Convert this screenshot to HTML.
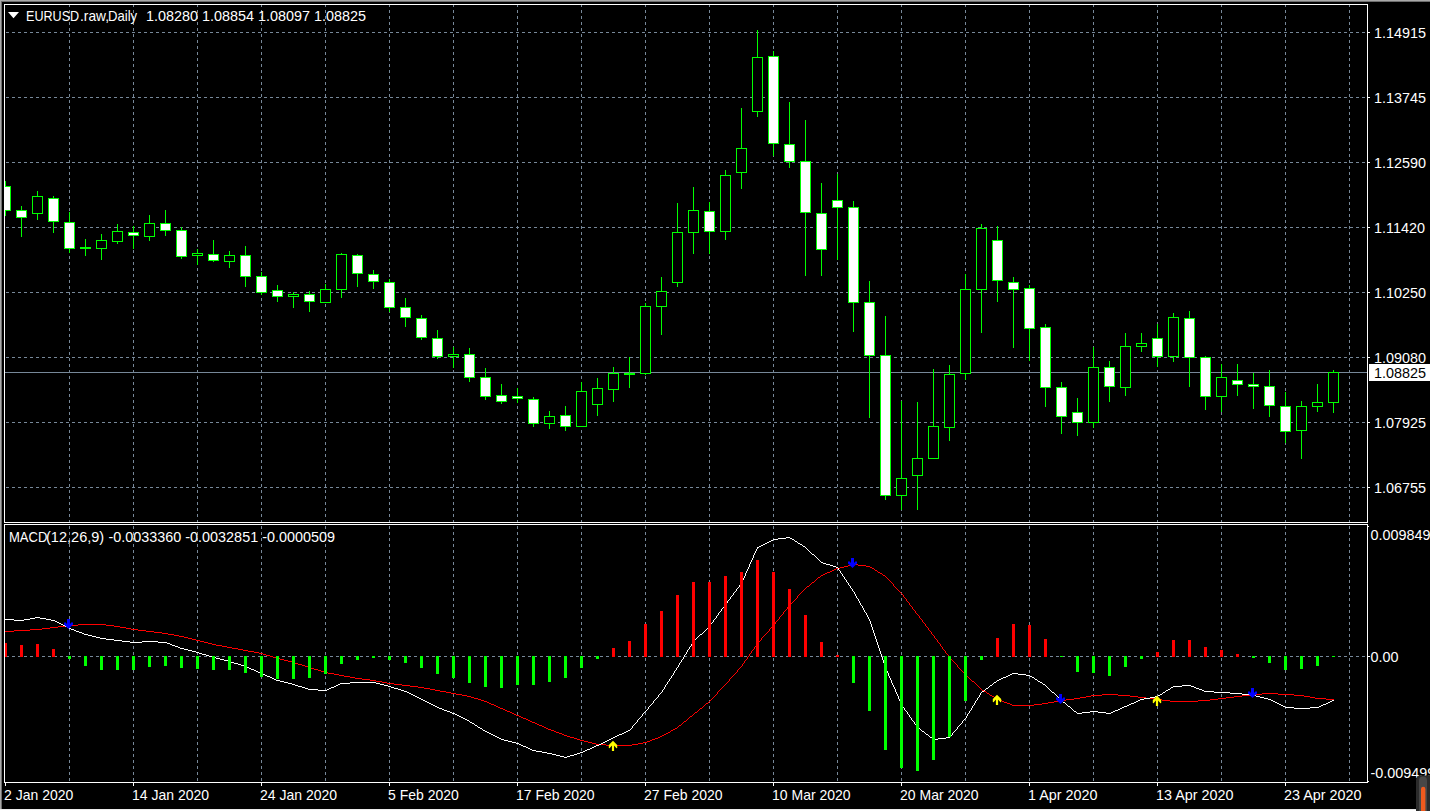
<!DOCTYPE html>
<html><head><meta charset="utf-8"><title>EURUSD.raw,Daily</title>
<style>
html,body{margin:0;padding:0;background:#000;overflow:hidden;}
body{width:1430px;height:811px;overflow:hidden;position:relative;font-family:"Liberation Sans",sans-serif;}
.t{position:absolute;white-space:pre;font-size:14.4px;line-height:16px;height:16px;transform-origin:0 0;font-family:"Liberation Sans",sans-serif;}
</style></head><body>
<svg width="1430" height="811" viewBox="0 0 1430 811" shape-rendering="crispEdges" style="position:absolute;left:0;top:0"><rect x="0" y="0" width="1430" height="811" fill="#000"/>
<rect x="0" y="0" width="1430" height="1" fill="#a9a9a9"/>
<rect x="0" y="1" width="1430" height="1" fill="#6f6f6f"/>
<rect x="0" y="0" width="1" height="811" fill="#a9a9a9"/>
<rect x="1" y="1" width="1" height="810" fill="#6f6f6f"/>
<rect x="2" y="2" width="1428" height="1" fill="#000"/>
<rect x="0" y="809" width="1430" height="1" fill="#ececec"/>
<rect x="0" y="810" width="1430" height="1" fill="#ffffff"/>
<rect x="0" y="2" width="1" height="807" fill="#a9a9a9"/>
<defs><clipPath id="cm"><rect x="5" y="5" width="1362" height="517"/></clipPath><clipPath id="cs"><rect x="5" y="525" width="1362" height="257"/></clipPath><clipPath id="ca"><rect x="5" y="5" width="1362" height="777"/></clipPath></defs>
<line x1="0" y1="32.5" x2="1367" y2="32.5" stroke="#778899" stroke-width="1" stroke-dasharray="3 3" clip-path="url(#cm)"/>
<line x1="0" y1="97.5" x2="1367" y2="97.5" stroke="#778899" stroke-width="1" stroke-dasharray="3 3" clip-path="url(#cm)"/>
<line x1="0" y1="162.5" x2="1367" y2="162.5" stroke="#778899" stroke-width="1" stroke-dasharray="3 3" clip-path="url(#cm)"/>
<line x1="0" y1="227.5" x2="1367" y2="227.5" stroke="#778899" stroke-width="1" stroke-dasharray="3 3" clip-path="url(#cm)"/>
<line x1="0" y1="292.5" x2="1367" y2="292.5" stroke="#778899" stroke-width="1" stroke-dasharray="3 3" clip-path="url(#cm)"/>
<line x1="0" y1="357.5" x2="1367" y2="357.5" stroke="#778899" stroke-width="1" stroke-dasharray="3 3" clip-path="url(#cm)"/>
<line x1="0" y1="422.5" x2="1367" y2="422.5" stroke="#778899" stroke-width="1" stroke-dasharray="3 3" clip-path="url(#cm)"/>
<line x1="0" y1="487.5" x2="1367" y2="487.5" stroke="#778899" stroke-width="1" stroke-dasharray="3 3" clip-path="url(#cm)"/>
<line x1="69.5" y1="4" x2="69.5" y2="522" stroke="#778899" stroke-width="1" stroke-dasharray="3 3" clip-path="url(#cm)"/>
<line x1="69.5" y1="520" x2="69.5" y2="782" stroke="#778899" stroke-width="1" stroke-dasharray="3 3" clip-path="url(#cs)"/>
<line x1="133.5" y1="4" x2="133.5" y2="522" stroke="#778899" stroke-width="1" stroke-dasharray="3 3" clip-path="url(#cm)"/>
<line x1="133.5" y1="520" x2="133.5" y2="782" stroke="#778899" stroke-width="1" stroke-dasharray="3 3" clip-path="url(#cs)"/>
<line x1="197.5" y1="4" x2="197.5" y2="522" stroke="#778899" stroke-width="1" stroke-dasharray="3 3" clip-path="url(#cm)"/>
<line x1="197.5" y1="520" x2="197.5" y2="782" stroke="#778899" stroke-width="1" stroke-dasharray="3 3" clip-path="url(#cs)"/>
<line x1="261.5" y1="4" x2="261.5" y2="522" stroke="#778899" stroke-width="1" stroke-dasharray="3 3" clip-path="url(#cm)"/>
<line x1="261.5" y1="520" x2="261.5" y2="782" stroke="#778899" stroke-width="1" stroke-dasharray="3 3" clip-path="url(#cs)"/>
<line x1="325.5" y1="4" x2="325.5" y2="522" stroke="#778899" stroke-width="1" stroke-dasharray="3 3" clip-path="url(#cm)"/>
<line x1="325.5" y1="520" x2="325.5" y2="782" stroke="#778899" stroke-width="1" stroke-dasharray="3 3" clip-path="url(#cs)"/>
<line x1="389.5" y1="4" x2="389.5" y2="522" stroke="#778899" stroke-width="1" stroke-dasharray="3 3" clip-path="url(#cm)"/>
<line x1="389.5" y1="520" x2="389.5" y2="782" stroke="#778899" stroke-width="1" stroke-dasharray="3 3" clip-path="url(#cs)"/>
<line x1="453.5" y1="4" x2="453.5" y2="522" stroke="#778899" stroke-width="1" stroke-dasharray="3 3" clip-path="url(#cm)"/>
<line x1="453.5" y1="520" x2="453.5" y2="782" stroke="#778899" stroke-width="1" stroke-dasharray="3 3" clip-path="url(#cs)"/>
<line x1="517.5" y1="4" x2="517.5" y2="522" stroke="#778899" stroke-width="1" stroke-dasharray="3 3" clip-path="url(#cm)"/>
<line x1="517.5" y1="520" x2="517.5" y2="782" stroke="#778899" stroke-width="1" stroke-dasharray="3 3" clip-path="url(#cs)"/>
<line x1="581.5" y1="4" x2="581.5" y2="522" stroke="#778899" stroke-width="1" stroke-dasharray="3 3" clip-path="url(#cm)"/>
<line x1="581.5" y1="520" x2="581.5" y2="782" stroke="#778899" stroke-width="1" stroke-dasharray="3 3" clip-path="url(#cs)"/>
<line x1="645.5" y1="4" x2="645.5" y2="522" stroke="#778899" stroke-width="1" stroke-dasharray="3 3" clip-path="url(#cm)"/>
<line x1="645.5" y1="520" x2="645.5" y2="782" stroke="#778899" stroke-width="1" stroke-dasharray="3 3" clip-path="url(#cs)"/>
<line x1="709.5" y1="4" x2="709.5" y2="522" stroke="#778899" stroke-width="1" stroke-dasharray="3 3" clip-path="url(#cm)"/>
<line x1="709.5" y1="520" x2="709.5" y2="782" stroke="#778899" stroke-width="1" stroke-dasharray="3 3" clip-path="url(#cs)"/>
<line x1="773.5" y1="4" x2="773.5" y2="522" stroke="#778899" stroke-width="1" stroke-dasharray="3 3" clip-path="url(#cm)"/>
<line x1="773.5" y1="520" x2="773.5" y2="782" stroke="#778899" stroke-width="1" stroke-dasharray="3 3" clip-path="url(#cs)"/>
<line x1="837.5" y1="4" x2="837.5" y2="522" stroke="#778899" stroke-width="1" stroke-dasharray="3 3" clip-path="url(#cm)"/>
<line x1="837.5" y1="520" x2="837.5" y2="782" stroke="#778899" stroke-width="1" stroke-dasharray="3 3" clip-path="url(#cs)"/>
<line x1="901.5" y1="4" x2="901.5" y2="522" stroke="#778899" stroke-width="1" stroke-dasharray="3 3" clip-path="url(#cm)"/>
<line x1="901.5" y1="520" x2="901.5" y2="782" stroke="#778899" stroke-width="1" stroke-dasharray="3 3" clip-path="url(#cs)"/>
<line x1="965.5" y1="4" x2="965.5" y2="522" stroke="#778899" stroke-width="1" stroke-dasharray="3 3" clip-path="url(#cm)"/>
<line x1="965.5" y1="520" x2="965.5" y2="782" stroke="#778899" stroke-width="1" stroke-dasharray="3 3" clip-path="url(#cs)"/>
<line x1="1029.5" y1="4" x2="1029.5" y2="522" stroke="#778899" stroke-width="1" stroke-dasharray="3 3" clip-path="url(#cm)"/>
<line x1="1029.5" y1="520" x2="1029.5" y2="782" stroke="#778899" stroke-width="1" stroke-dasharray="3 3" clip-path="url(#cs)"/>
<line x1="1093.5" y1="4" x2="1093.5" y2="522" stroke="#778899" stroke-width="1" stroke-dasharray="3 3" clip-path="url(#cm)"/>
<line x1="1093.5" y1="520" x2="1093.5" y2="782" stroke="#778899" stroke-width="1" stroke-dasharray="3 3" clip-path="url(#cs)"/>
<line x1="1157.5" y1="4" x2="1157.5" y2="522" stroke="#778899" stroke-width="1" stroke-dasharray="3 3" clip-path="url(#cm)"/>
<line x1="1157.5" y1="520" x2="1157.5" y2="782" stroke="#778899" stroke-width="1" stroke-dasharray="3 3" clip-path="url(#cs)"/>
<line x1="1221.5" y1="4" x2="1221.5" y2="522" stroke="#778899" stroke-width="1" stroke-dasharray="3 3" clip-path="url(#cm)"/>
<line x1="1221.5" y1="520" x2="1221.5" y2="782" stroke="#778899" stroke-width="1" stroke-dasharray="3 3" clip-path="url(#cs)"/>
<line x1="1285.5" y1="4" x2="1285.5" y2="522" stroke="#778899" stroke-width="1" stroke-dasharray="3 3" clip-path="url(#cm)"/>
<line x1="1285.5" y1="520" x2="1285.5" y2="782" stroke="#778899" stroke-width="1" stroke-dasharray="3 3" clip-path="url(#cs)"/>
<line x1="1349.5" y1="4" x2="1349.5" y2="522" stroke="#778899" stroke-width="1" stroke-dasharray="3 3" clip-path="url(#cm)"/>
<line x1="1349.5" y1="520" x2="1349.5" y2="782" stroke="#778899" stroke-width="1" stroke-dasharray="3 3" clip-path="url(#cs)"/>
<line x1="0" y1="656.5" x2="1367" y2="656.5" stroke="#778899" stroke-width="1" stroke-dasharray="3 3" clip-path="url(#cs)"/>
<rect x="5" y="372" width="1363" height="1" fill="#778899"/>
<g clip-path="url(#cm)">
<rect x="5" y="181" width="1" height="35" fill="#00ff00"/>
<rect x="0" y="186" width="11" height="25" fill="#00ff00"/>
<rect x="1" y="187" width="9" height="23" fill="#fff"/>
<rect x="21" y="206" width="1" height="31" fill="#00ff00"/>
<rect x="16" y="210" width="11" height="8" fill="#00ff00"/>
<rect x="17" y="211" width="9" height="6" fill="#fff"/>
<rect x="37" y="191" width="1" height="29" fill="#00ff00"/>
<rect x="32" y="196" width="11" height="18" fill="#00ff00"/>
<rect x="33" y="197" width="9" height="16" fill="#000"/>
<rect x="53" y="196" width="1" height="37" fill="#00ff00"/>
<rect x="48" y="198" width="11" height="24" fill="#00ff00"/>
<rect x="49" y="199" width="9" height="22" fill="#fff"/>
<rect x="69" y="212" width="1" height="41" fill="#00ff00"/>
<rect x="64" y="222" width="11" height="27" fill="#00ff00"/>
<rect x="65" y="223" width="9" height="25" fill="#fff"/>
<rect x="85" y="239" width="1" height="17" fill="#00ff00"/>
<rect x="80" y="247" width="11" height="2" fill="#00ff00"/>
<rect x="101" y="234" width="1" height="26" fill="#00ff00"/>
<rect x="96" y="240" width="11" height="9" fill="#00ff00"/>
<rect x="97" y="241" width="9" height="7" fill="#000"/>
<rect x="117" y="224" width="1" height="20" fill="#00ff00"/>
<rect x="112" y="231" width="11" height="11" fill="#00ff00"/>
<rect x="113" y="232" width="9" height="9" fill="#000"/>
<rect x="133" y="226" width="1" height="23" fill="#00ff00"/>
<rect x="128" y="232" width="11" height="4" fill="#00ff00"/>
<rect x="129" y="233" width="9" height="2" fill="#fff"/>
<rect x="149" y="215" width="1" height="26" fill="#00ff00"/>
<rect x="144" y="223" width="11" height="14" fill="#00ff00"/>
<rect x="145" y="224" width="9" height="12" fill="#000"/>
<rect x="165" y="210" width="1" height="26" fill="#00ff00"/>
<rect x="160" y="223" width="11" height="8" fill="#00ff00"/>
<rect x="161" y="224" width="9" height="6" fill="#fff"/>
<rect x="181" y="227" width="1" height="32" fill="#00ff00"/>
<rect x="176" y="230" width="11" height="27" fill="#00ff00"/>
<rect x="177" y="231" width="9" height="25" fill="#fff"/>
<rect x="197" y="249" width="1" height="16" fill="#00ff00"/>
<rect x="192" y="253" width="11" height="3" fill="#00ff00"/>
<rect x="193" y="254" width="9" height="1" fill="#000"/>
<rect x="213" y="240" width="1" height="22" fill="#00ff00"/>
<rect x="208" y="254" width="11" height="7" fill="#00ff00"/>
<rect x="209" y="255" width="9" height="5" fill="#fff"/>
<rect x="229" y="251" width="1" height="17" fill="#00ff00"/>
<rect x="224" y="255" width="11" height="7" fill="#00ff00"/>
<rect x="225" y="256" width="9" height="5" fill="#000"/>
<rect x="245" y="246" width="1" height="41" fill="#00ff00"/>
<rect x="240" y="255" width="11" height="22" fill="#00ff00"/>
<rect x="241" y="256" width="9" height="20" fill="#fff"/>
<rect x="261" y="272" width="1" height="23" fill="#00ff00"/>
<rect x="256" y="276" width="11" height="17" fill="#00ff00"/>
<rect x="257" y="277" width="9" height="15" fill="#fff"/>
<rect x="277" y="285" width="1" height="17" fill="#00ff00"/>
<rect x="272" y="290" width="11" height="7" fill="#00ff00"/>
<rect x="273" y="291" width="9" height="5" fill="#fff"/>
<rect x="293" y="292" width="1" height="16" fill="#00ff00"/>
<rect x="288" y="294" width="11" height="3" fill="#00ff00"/>
<rect x="289" y="295" width="9" height="1" fill="#000"/>
<rect x="309" y="291" width="1" height="21" fill="#00ff00"/>
<rect x="304" y="294" width="11" height="8" fill="#00ff00"/>
<rect x="305" y="295" width="9" height="6" fill="#fff"/>
<rect x="325" y="284" width="1" height="19" fill="#00ff00"/>
<rect x="320" y="289" width="11" height="14" fill="#00ff00"/>
<rect x="321" y="290" width="9" height="12" fill="#000"/>
<rect x="341" y="253" width="1" height="45" fill="#00ff00"/>
<rect x="336" y="254" width="11" height="36" fill="#00ff00"/>
<rect x="337" y="255" width="9" height="34" fill="#000"/>
<rect x="357" y="254" width="1" height="33" fill="#00ff00"/>
<rect x="352" y="255" width="11" height="19" fill="#00ff00"/>
<rect x="353" y="256" width="9" height="17" fill="#fff"/>
<rect x="373" y="270" width="1" height="19" fill="#00ff00"/>
<rect x="368" y="274" width="11" height="8" fill="#00ff00"/>
<rect x="369" y="275" width="9" height="6" fill="#fff"/>
<rect x="389" y="279" width="1" height="33" fill="#00ff00"/>
<rect x="384" y="282" width="11" height="26" fill="#00ff00"/>
<rect x="385" y="283" width="9" height="24" fill="#fff"/>
<rect x="405" y="298" width="1" height="29" fill="#00ff00"/>
<rect x="400" y="307" width="11" height="11" fill="#00ff00"/>
<rect x="401" y="308" width="9" height="9" fill="#fff"/>
<rect x="421" y="315" width="1" height="25" fill="#00ff00"/>
<rect x="416" y="318" width="11" height="20" fill="#00ff00"/>
<rect x="417" y="319" width="9" height="18" fill="#fff"/>
<rect x="437" y="330" width="1" height="29" fill="#00ff00"/>
<rect x="432" y="338" width="11" height="19" fill="#00ff00"/>
<rect x="433" y="339" width="9" height="17" fill="#fff"/>
<rect x="453" y="347" width="1" height="21" fill="#00ff00"/>
<rect x="448" y="354" width="11" height="3" fill="#00ff00"/>
<rect x="449" y="355" width="9" height="1" fill="#000"/>
<rect x="469" y="348" width="1" height="34" fill="#00ff00"/>
<rect x="464" y="354" width="11" height="24" fill="#00ff00"/>
<rect x="465" y="355" width="9" height="22" fill="#fff"/>
<rect x="485" y="368" width="1" height="32" fill="#00ff00"/>
<rect x="480" y="377" width="11" height="20" fill="#00ff00"/>
<rect x="481" y="378" width="9" height="18" fill="#fff"/>
<rect x="501" y="384" width="1" height="20" fill="#00ff00"/>
<rect x="496" y="395" width="11" height="7" fill="#00ff00"/>
<rect x="497" y="396" width="9" height="5" fill="#fff"/>
<rect x="517" y="388" width="1" height="15" fill="#00ff00"/>
<rect x="512" y="396" width="11" height="3" fill="#00ff00"/>
<rect x="513" y="397" width="9" height="1" fill="#fff"/>
<rect x="533" y="397" width="1" height="30" fill="#00ff00"/>
<rect x="528" y="399" width="11" height="25" fill="#00ff00"/>
<rect x="529" y="400" width="9" height="23" fill="#fff"/>
<rect x="549" y="411" width="1" height="18" fill="#00ff00"/>
<rect x="544" y="416" width="11" height="8" fill="#00ff00"/>
<rect x="545" y="417" width="9" height="6" fill="#000"/>
<rect x="565" y="406" width="1" height="25" fill="#00ff00"/>
<rect x="560" y="415" width="11" height="12" fill="#00ff00"/>
<rect x="561" y="416" width="9" height="10" fill="#fff"/>
<rect x="581" y="382" width="1" height="45" fill="#00ff00"/>
<rect x="576" y="391" width="11" height="36" fill="#00ff00"/>
<rect x="577" y="392" width="9" height="34" fill="#000"/>
<rect x="597" y="378" width="1" height="38" fill="#00ff00"/>
<rect x="592" y="388" width="11" height="17" fill="#00ff00"/>
<rect x="593" y="389" width="9" height="15" fill="#000"/>
<rect x="613" y="367" width="1" height="35" fill="#00ff00"/>
<rect x="608" y="373" width="11" height="17" fill="#00ff00"/>
<rect x="609" y="374" width="9" height="15" fill="#000"/>
<rect x="629" y="357" width="1" height="31" fill="#00ff00"/>
<rect x="624" y="373" width="11" height="2" fill="#00ff00"/>
<rect x="645" y="303" width="1" height="72" fill="#00ff00"/>
<rect x="640" y="306" width="11" height="68" fill="#00ff00"/>
<rect x="641" y="307" width="9" height="66" fill="#000"/>
<rect x="661" y="277" width="1" height="58" fill="#00ff00"/>
<rect x="656" y="291" width="11" height="16" fill="#00ff00"/>
<rect x="657" y="292" width="9" height="14" fill="#000"/>
<rect x="677" y="203" width="1" height="84" fill="#00ff00"/>
<rect x="672" y="232" width="11" height="51" fill="#00ff00"/>
<rect x="673" y="233" width="9" height="49" fill="#000"/>
<rect x="693" y="187" width="1" height="67" fill="#00ff00"/>
<rect x="688" y="210" width="11" height="23" fill="#00ff00"/>
<rect x="689" y="211" width="9" height="21" fill="#000"/>
<rect x="709" y="202" width="1" height="52" fill="#00ff00"/>
<rect x="704" y="211" width="11" height="21" fill="#00ff00"/>
<rect x="705" y="212" width="9" height="19" fill="#fff"/>
<rect x="725" y="170" width="1" height="70" fill="#00ff00"/>
<rect x="720" y="175" width="11" height="57" fill="#00ff00"/>
<rect x="721" y="176" width="9" height="55" fill="#000"/>
<rect x="741" y="108" width="1" height="81" fill="#00ff00"/>
<rect x="736" y="148" width="11" height="25" fill="#00ff00"/>
<rect x="737" y="149" width="9" height="23" fill="#000"/>
<rect x="757" y="30" width="1" height="87" fill="#00ff00"/>
<rect x="752" y="57" width="11" height="55" fill="#00ff00"/>
<rect x="753" y="58" width="9" height="53" fill="#000"/>
<rect x="773" y="51" width="1" height="105" fill="#00ff00"/>
<rect x="768" y="56" width="11" height="88" fill="#00ff00"/>
<rect x="769" y="57" width="9" height="86" fill="#fff"/>
<rect x="789" y="102" width="1" height="66" fill="#00ff00"/>
<rect x="784" y="144" width="11" height="18" fill="#00ff00"/>
<rect x="785" y="145" width="9" height="16" fill="#fff"/>
<rect x="805" y="120" width="1" height="156" fill="#00ff00"/>
<rect x="800" y="161" width="11" height="52" fill="#00ff00"/>
<rect x="801" y="162" width="9" height="50" fill="#fff"/>
<rect x="821" y="183" width="1" height="93" fill="#00ff00"/>
<rect x="816" y="213" width="11" height="37" fill="#00ff00"/>
<rect x="817" y="214" width="9" height="35" fill="#fff"/>
<rect x="837" y="174" width="1" height="86" fill="#00ff00"/>
<rect x="832" y="200" width="11" height="8" fill="#00ff00"/>
<rect x="833" y="201" width="9" height="6" fill="#fff"/>
<rect x="853" y="201" width="1" height="131" fill="#00ff00"/>
<rect x="848" y="207" width="11" height="96" fill="#00ff00"/>
<rect x="849" y="208" width="9" height="94" fill="#fff"/>
<rect x="869" y="281" width="1" height="137" fill="#00ff00"/>
<rect x="864" y="302" width="11" height="54" fill="#00ff00"/>
<rect x="865" y="303" width="9" height="52" fill="#fff"/>
<rect x="885" y="316" width="1" height="184" fill="#00ff00"/>
<rect x="880" y="355" width="11" height="141" fill="#00ff00"/>
<rect x="881" y="356" width="9" height="139" fill="#fff"/>
<rect x="901" y="401" width="1" height="109" fill="#00ff00"/>
<rect x="896" y="478" width="11" height="18" fill="#00ff00"/>
<rect x="897" y="479" width="9" height="16" fill="#000"/>
<rect x="917" y="402" width="1" height="108" fill="#00ff00"/>
<rect x="912" y="458" width="11" height="18" fill="#00ff00"/>
<rect x="913" y="459" width="9" height="16" fill="#000"/>
<rect x="933" y="369" width="1" height="90" fill="#00ff00"/>
<rect x="928" y="426" width="11" height="33" fill="#00ff00"/>
<rect x="929" y="427" width="9" height="31" fill="#000"/>
<rect x="949" y="365" width="1" height="76" fill="#00ff00"/>
<rect x="944" y="374" width="11" height="54" fill="#00ff00"/>
<rect x="945" y="375" width="9" height="52" fill="#000"/>
<rect x="965" y="274" width="1" height="106" fill="#00ff00"/>
<rect x="960" y="289" width="11" height="85" fill="#00ff00"/>
<rect x="961" y="290" width="9" height="83" fill="#000"/>
<rect x="981" y="224" width="1" height="109" fill="#00ff00"/>
<rect x="976" y="228" width="11" height="62" fill="#00ff00"/>
<rect x="977" y="229" width="9" height="60" fill="#000"/>
<rect x="997" y="226" width="1" height="76" fill="#00ff00"/>
<rect x="992" y="240" width="11" height="41" fill="#00ff00"/>
<rect x="993" y="241" width="9" height="39" fill="#fff"/>
<rect x="1013" y="277" width="1" height="71" fill="#00ff00"/>
<rect x="1008" y="282" width="11" height="8" fill="#00ff00"/>
<rect x="1009" y="283" width="9" height="6" fill="#fff"/>
<rect x="1029" y="285" width="1" height="76" fill="#00ff00"/>
<rect x="1024" y="288" width="11" height="41" fill="#00ff00"/>
<rect x="1025" y="289" width="9" height="39" fill="#fff"/>
<rect x="1045" y="324" width="1" height="83" fill="#00ff00"/>
<rect x="1040" y="327" width="11" height="61" fill="#00ff00"/>
<rect x="1041" y="328" width="9" height="59" fill="#fff"/>
<rect x="1061" y="382" width="1" height="52" fill="#00ff00"/>
<rect x="1056" y="387" width="11" height="30" fill="#00ff00"/>
<rect x="1057" y="388" width="9" height="28" fill="#fff"/>
<rect x="1077" y="398" width="1" height="38" fill="#00ff00"/>
<rect x="1072" y="412" width="11" height="11" fill="#00ff00"/>
<rect x="1073" y="413" width="9" height="9" fill="#fff"/>
<rect x="1093" y="347" width="1" height="81" fill="#00ff00"/>
<rect x="1088" y="367" width="11" height="56" fill="#00ff00"/>
<rect x="1089" y="368" width="9" height="54" fill="#000"/>
<rect x="1109" y="361" width="1" height="41" fill="#00ff00"/>
<rect x="1104" y="367" width="11" height="20" fill="#00ff00"/>
<rect x="1105" y="368" width="9" height="18" fill="#fff"/>
<rect x="1125" y="333" width="1" height="63" fill="#00ff00"/>
<rect x="1120" y="346" width="11" height="42" fill="#00ff00"/>
<rect x="1121" y="347" width="9" height="40" fill="#000"/>
<rect x="1141" y="333" width="1" height="19" fill="#00ff00"/>
<rect x="1136" y="343" width="11" height="4" fill="#00ff00"/>
<rect x="1137" y="344" width="9" height="2" fill="#000"/>
<rect x="1157" y="324" width="1" height="43" fill="#00ff00"/>
<rect x="1152" y="338" width="11" height="19" fill="#00ff00"/>
<rect x="1153" y="339" width="9" height="17" fill="#fff"/>
<rect x="1173" y="313" width="1" height="49" fill="#00ff00"/>
<rect x="1168" y="317" width="11" height="40" fill="#00ff00"/>
<rect x="1169" y="318" width="9" height="38" fill="#000"/>
<rect x="1189" y="311" width="1" height="76" fill="#00ff00"/>
<rect x="1184" y="318" width="11" height="40" fill="#00ff00"/>
<rect x="1185" y="319" width="9" height="38" fill="#fff"/>
<rect x="1205" y="356" width="1" height="54" fill="#00ff00"/>
<rect x="1200" y="357" width="11" height="40" fill="#00ff00"/>
<rect x="1201" y="358" width="9" height="38" fill="#fff"/>
<rect x="1221" y="364" width="1" height="48" fill="#00ff00"/>
<rect x="1216" y="377" width="11" height="20" fill="#00ff00"/>
<rect x="1217" y="378" width="9" height="18" fill="#000"/>
<rect x="1237" y="364" width="1" height="32" fill="#00ff00"/>
<rect x="1232" y="380" width="11" height="5" fill="#00ff00"/>
<rect x="1233" y="381" width="9" height="3" fill="#fff"/>
<rect x="1253" y="373" width="1" height="36" fill="#00ff00"/>
<rect x="1248" y="384" width="11" height="3" fill="#00ff00"/>
<rect x="1249" y="385" width="9" height="1" fill="#fff"/>
<rect x="1269" y="370" width="1" height="47" fill="#00ff00"/>
<rect x="1264" y="386" width="11" height="20" fill="#00ff00"/>
<rect x="1265" y="387" width="9" height="18" fill="#fff"/>
<rect x="1285" y="392" width="1" height="51" fill="#00ff00"/>
<rect x="1280" y="406" width="11" height="26" fill="#00ff00"/>
<rect x="1281" y="407" width="9" height="24" fill="#fff"/>
<rect x="1301" y="401" width="1" height="58" fill="#00ff00"/>
<rect x="1296" y="406" width="11" height="25" fill="#00ff00"/>
<rect x="1297" y="407" width="9" height="23" fill="#000"/>
<rect x="1317" y="384" width="1" height="28" fill="#00ff00"/>
<rect x="1312" y="402" width="11" height="5" fill="#00ff00"/>
<rect x="1313" y="403" width="9" height="3" fill="#000"/>
<rect x="1333" y="370" width="1" height="43" fill="#00ff00"/>
<rect x="1328" y="372" width="11" height="31" fill="#00ff00"/>
<rect x="1329" y="373" width="9" height="29" fill="#000"/>
</g>
<g clip-path="url(#cs)">
<path d="M807 586h2v1h-2zM836 568h4v1h-4zM872 568h2v1h-2zM830 571h2v1h-2zM456 694h6v1h-6zM1102 694h16v1h-16zM1250 694h12v1h-12zM1278 694h16v1h-16zM66 625h12v1h-12zM106 625h8v1h-8zM592 743h4v1h-4zM638 743h5v1h-5zM273 657h3v1h-3zM494 705h2v1h-2zM1012 705h22v1h-22zM471 697h3v1h-3zM1080 697h6v1h-6zM1138 697h8v1h-8zM1226 697h8v1h-8zM1310 697h5v1h-5zM451 693h5v1h-5zM987 693h2v1h-2zM1262 693h16v1h-16zM519 716h2v1h-2zM690 716h2v1h-2zM852 564h6v1h-6zM321 671h3v1h-3zM370 680h6v1h-6zM848 565h4v1h-4zM858 565h8v1h-8zM467 696h4v1h-4zM992 696h2v1h-2zM1086 696h5v1h-5zM1130 696h8v1h-8zM1234 696h8v1h-8zM1304 696h6v1h-6zM474 698h4v1h-4zM995 698h2v1h-2zM1074 698h6v1h-6zM1146 698h8v1h-8zM1218 698h8v1h-8zM1315 698h11v1h-11zM570 737h4v1h-4zM658 737h2v1h-2zM50 627h8v1h-8zM120 627h6v1h-6zM424 688h6v1h-6zM484 701h3v1h-3zM1002 701h2v1h-2zM1054 701h5v1h-5zM1170 701h28v1h-28zM298 664h4v1h-4zM446 692h5v1h-5zM362 679h8v1h-8zM42 628h8v1h-8zM126 628h5v1h-5zM606 745h26v1h-26zM410 686h8v1h-8zM238 649h5v1h-5zM832 570h2v1h-2zM875 570h2v1h-2zM596 744h10v1h-10zM632 744h6v1h-6zM562 734h2v1h-2zM664 734h2v1h-2zM78 624h28v1h-28zM196 640h4v1h-4zM14 630h16v1h-16zM138 630h8v1h-8zM487 702h2v1h-2zM1004 702h3v1h-3zM1048 702h6v1h-6zM462 695h5v1h-5zM990 695h2v1h-2zM1091 695h11v1h-11zM1118 695h12v1h-12zM1242 695h8v1h-8zM1294 695h10v1h-10zM188 638h4v1h-4zM288 661h4v1h-4zM478 699h3v1h-3zM997 699h2v1h-2zM1066 699h8v1h-8zM1154 699h8v1h-8zM1210 699h8v1h-8zM1326 699h8v1h-8zM535 723h2v1h-2zM510 712h2v1h-2zM695 712h2v1h-2zM528 720h2v1h-2zM162 633h6v1h-6zM430 689h5v1h-5zM489 703h2v1h-2zM706 703h2v1h-2zM1007 703h3v1h-3zM1042 703h6v1h-6zM4 631h10v1h-10zM146 631h8v1h-8zM259 653h4v1h-4zM192 639h4v1h-4zM564 735h3v1h-3zM662 735h2v1h-2zM574 738h3v1h-3zM655 738h3v1h-3zM243 650h5v1h-5zM556 732h3v1h-3zM668 732h2v1h-2zM840 567h4v1h-4zM870 567h2v1h-2zM292 662h3v1h-3zM232 648h6v1h-6zM402 685h8v1h-8zM481 700h3v1h-3zM999 700h3v1h-3zM1059 700h7v1h-7zM1162 700h8v1h-8zM1198 700h12v1h-12zM284 660h4v1h-4zM216 645h6v1h-6zM168 634h6v1h-6zM567 736h3v1h-3zM660 736h2v1h-2zM212 644h4v1h-4zM491 704h3v1h-3zM1010 704h2v1h-2zM1034 704h8v1h-8zM532 722h3v1h-3zM318 670h3v1h-3zM208 643h4v1h-4zM440 691h6v1h-6zM984 691h2v1h-2zM30 629h12v1h-12zM131 629h7v1h-7zM344 676h6v1h-6zM523 718h3v1h-3zM516 715h3v1h-3zM254 652h5v1h-5zM305 666h3v1h-3zM324 672h4v1h-4zM526 719h2v1h-2zM58 626h8v1h-8zM114 626h6v1h-6zM394 684h8v1h-8zM823 574h2v1h-2zM314 669h4v1h-4zM580 740h4v1h-4zM650 740h2v1h-2zM514 714h2v1h-2zM588 742h4v1h-4zM643 742h4v1h-4zM339 675h5v1h-5zM382 682h5v1h-5zM821 575h2v1h-2zM883 575h2v1h-2zM184 637h4v1h-4zM200 641h4v1h-4zM577 739h3v1h-3zM652 739h3v1h-3zM551 730h3v1h-3zM671 730h2v1h-2zM328 673h6v1h-6zM248 651h6v1h-6zM295 663h3v1h-3zM276 658h4v1h-4zM507 711h3v1h-3zM584 741h4v1h-4zM647 741h3v1h-3zM280 659h4v1h-4zM311 668h3v1h-3zM812 582h2v1h-2zM227 647h5v1h-5zM825 573h2v1h-2zM880 573h2v1h-2zM154 632h8v1h-8zM266 655h4v1h-4zM302 665h3v1h-3zM179 636h5v1h-5zM844 566h4v1h-4zM866 566h4v1h-4zM387 683h7v1h-7zM204 642h4v1h-4zM355 678h7v1h-7zM548 729h3v1h-3zM673 729h2v1h-2zM521 717h2v1h-2zM376 681h6v1h-6zM972 681h2v1h-2zM496 706h2v1h-2zM537 724h2v1h-2zM308 667h3v1h-3zM827 572h3v1h-3zM878 572h2v1h-2zM334 674h5v1h-5zM263 654h3v1h-3zM559 733h3v1h-3zM666 733h2v1h-2zM418 687h6v1h-6zM539 725h3v1h-3zM679 725h2v1h-2zM174 635h5v1h-5zM512 713h2v1h-2zM503 709h2v1h-2zM818 577h2v1h-2zM498 707h2v1h-2zM350 677h5v1h-5zM554 731h2v1h-2zM270 656h3v1h-3zM500 708h3v1h-3zM700 708h2v1h-2zM530 721h2v1h-2zM684 721h2v1h-2zM505 710h2v1h-2zM544 727h2v1h-2zM222 646h5v1h-5zM546 728h2v1h-2zM675 728h2v1h-2zM435 690h5v1h-5zM982 690h2v1h-2zM834 569h2v1h-2zM542 726h2v1h-2zM748 656h1v1h-1zM750 653h1v1h-1zM715 695h1v1h-1zM948 655h1v2h-1zM702 707h1v1h-1zM736 672h1v1h-1zM968 677h1v1h-1zM782 614h1v1h-1zM874 569h1v1h-1zM783 612h1v2h-1zM897 589h1v1h-1zM964 673h1v1h-1zM981 689h1v1h-1zM756 644h1v2h-1zM798 595h1v1h-1zM913 609h1v1h-1zM778 619h1v1h-1zM922 620h1v2h-1zM893 584h1v2h-1zM931 632h1v2h-1zM970 679h1v1h-1zM940 644h1v2h-1zM794 600h1v1h-1zM965 674h1v1h-1zM761 638h1v2h-1zM723 686h1v1h-1zM955 663h1v1h-1zM792 602h1v1h-1zM793 601h1v1h-1zM721 688h1v1h-1zM722 687h1v1h-1zM729 679h1v2h-1zM744 661h1v2h-1zM742 664h1v2h-1zM678 726h1v1h-1zM790 604h1v1h-1zM776 621h1v1h-1zM971 680h1v1h-1zM791 603h1v1h-1zM670 731h1v1h-1zM754 647h1v2h-1zM906 599h1v2h-1zM720 689h1v1h-1zM915 611h1v2h-1zM900 592h1v1h-1zM740 667h1v1h-1zM909 603h1v2h-1zM946 653h1v1h-1zM682 723h1v1h-1zM772 626h1v1h-1zM787 607h1v2h-1zM956 664h1v1h-1zM896 588h1v1h-1zM885 576h1v1h-1zM802 591h1v1h-1zM768 631h1v1h-1zM986 692h1v1h-1zM770 628h1v1h-1zM769 629h1v2h-1zM919 616h1v2h-1zM811 583h1v1h-1zM891 582h1v1h-1zM920 618h1v1h-1zM817 578h1v1h-1zM929 630h1v1h-1zM806 587h1v1h-1zM766 633h1v1h-1zM938 642h1v1h-1zM767 632h1v1h-1zM947 654h1v1h-1zM887 578h1v1h-1zM735 673h1v1h-1zM738 669h1v1h-1zM815 580h1v1h-1zM797 596h1v2h-1zM784 611h1v1h-1zM804 589h1v1h-1zM902 594h1v1h-1zM805 588h1v1h-1zM939 643h1v1h-1zM765 634h1v1h-1zM911 606h1v1h-1zM713 697h1v1h-1zM969 678h1v1h-1zM733 675h1v1h-1zM942 647h1v2h-1zM903 595h1v2h-1zM734 674h1v1h-1zM912 607h1v2h-1zM780 616h1v1h-1zM898 590h1v1h-1zM781 615h1v1h-1zM921 619h1v1h-1zM892 583h1v1h-1zM803 590h1v1h-1zM930 631h1v1h-1zM711 699h1v1h-1zM809 585h1v1h-1zM712 698h1v1h-1zM894 586h1v1h-1zM937 640h1v2h-1zM732 676h1v1h-1zM957 665h1v2h-1zM888 579h1v1h-1zM801 592h1v1h-1zM777 620h1v1h-1zM779 617h1v2h-1zM907 601h1v1h-1zM916 613h1v1h-1zM728 681h1v1h-1zM694 713h1v1h-1zM699 709h1v1h-1zM889 580h1v1h-1zM773 625h1v1h-1zM760 640h1v1h-1zM683 722h1v1h-1zM688 718h1v1h-1zM882 574h1v1h-1zM689 717h1v1h-1zM775 622h1v2h-1zM746 659h1v1h-1zM771 627h1v1h-1zM758 642h1v1h-1zM975 683h1v1h-1zM687 719h1v1h-1zM693 714h1v1h-1zM945 651h1v2h-1zM743 663h1v1h-1zM677 727h1v1h-1zM901 593h1v1h-1zM789 605h1v1h-1zM752 650h1v1h-1zM989 694h1v1h-1zM755 646h1v1h-1zM757 643h1v1h-1zM890 581h1v1h-1zM718 691h1v1h-1zM910 605h1v1h-1zM686 720h1v1h-1zM739 668h1v1h-1zM816 579h1v1h-1zM918 615h1v1h-1zM785 610h1v1h-1zM788 606h1v1h-1zM949 657h1v1h-1zM751 651h1v2h-1zM795 599h1v1h-1zM714 696h1v1h-1zM717 692h1v2h-1zM928 628h1v2h-1zM724 685h1v1h-1zM737 670h1v2h-1zM820 576h1v1h-1zM810 584h1v1h-1zM978 686h1v1h-1zM925 624h1v2h-1zM934 636h1v2h-1zM814 581h1v1h-1zM943 649h1v1h-1zM974 682h1v1h-1zM763 636h1v1h-1zM764 635h1v1h-1zM962 671h1v1h-1zM979 687h1v1h-1zM747 657h1v2h-1zM749 654h1v2h-1zM958 667h1v1h-1zM759 641h1v1h-1zM704 705h1v1h-1zM705 704h1v1h-1zM762 637h1v1h-1zM994 697h1v1h-1zM710 700h1v1h-1zM908 602h1v1h-1zM730 678h1v1h-1zM745 660h1v1h-1zM731 677h1v1h-1zM917 614h1v1h-1zM926 626h1v1h-1zM935 638h1v1h-1zM799 594h1v1h-1zM800 593h1v1h-1zM944 650h1v1h-1zM953 661h1v1h-1zM708 702h1v1h-1zM703 706h1v1h-1zM726 683h1v1h-1zM692 715h1v1h-1zM727 682h1v1h-1zM980 688h1v1h-1zM963 672h1v1h-1zM697 711h1v1h-1zM681 724h1v1h-1zM927 627h1v1h-1zM698 710h1v1h-1zM796 598h1v1h-1zM936 639h1v1h-1zM959 668h1v1h-1zM976 684h1v1h-1zM877 571h1v1h-1zM725 684h1v1h-1zM960 669h1v1h-1zM977 685h1v1h-1zM954 662h1v1h-1zM932 634h1v1h-1zM904 597h1v1h-1zM941 646h1v1h-1zM950 658h1v1h-1zM905 598h1v1h-1zM774 624h1v1h-1zM914 610h1v1h-1zM899 591h1v1h-1zM951 659h1v1h-1zM966 675h1v1h-1zM923 622h1v1h-1zM961 670h1v1h-1zM895 587h1v1h-1zM924 623h1v1h-1zM933 635h1v1h-1zM967 676h1v1h-1zM741 666h1v1h-1zM709 701h1v1h-1zM753 649h1v1h-1zM716 694h1v1h-1zM719 690h1v1h-1zM952 660h1v1h-1zM786 609h1v1h-1zM886 577h1v1h-1z" fill="#ff0000"/>
<path d="M175 646h3v1h-3zM184 649h4v1h-4zM560 756h4v1h-4zM567 756h3v1h-3zM308 689h10v1h-10zM327 689h2v1h-2zM398 689h3v1h-3zM1168 689h2v1h-2zM1199 689h3v1h-3zM452 713h3v1h-3zM1077 713h5v1h-5zM1106 713h5v1h-5zM778 538h8v1h-8zM790 538h2v1h-2zM241 665h3v1h-3zM130 642h12v1h-12zM158 642h9v1h-9zM288 683h4v1h-4zM340 683h10v1h-10zM376 683h4v1h-4zM295 685h3v1h-3zM336 685h2v1h-2zM384 685h4v1h-4zM990 685h2v1h-2zM1182 685h9v1h-9zM212 657h4v1h-4zM407 692h2v1h-2zM1052 692h2v1h-2zM1163 692h2v1h-2zM1214 692h16v1h-16zM260 673h3v1h-3zM1012 673h6v1h-6zM465 719h2v1h-2zM457 715h2v1h-2zM220 659h4v1h-4zM284 682h4v1h-4zM350 682h26v1h-26zM994 682h2v1h-2zM1040 682h2v1h-2zM547 753h5v1h-5zM577 753h3v1h-3zM292 684h3v1h-3zM338 684h2v1h-2zM380 684h4v1h-4zM1043 684h2v1h-2zM450 712h2v1h-2zM1082 712h8v1h-8zM1098 712h8v1h-8zM1111 712h2v1h-2zM404 691h3v1h-3zM982 691h2v1h-2zM1204 691h10v1h-10zM415 696h2v1h-2zM1155 696h3v1h-3zM1256 696h4v1h-4zM504 740h4v1h-4zM607 740h2v1h-2zM470 722h2v1h-2zM265 675h2v1h-2zM1008 675h2v1h-2zM1026 675h4v1h-4zM429 703h2v1h-2zM1131 703h3v1h-3zM1277 703h2v1h-2zM1326 703h2v1h-2zM442 709h2v1h-2zM1118 709h2v1h-2zM122 641h8v1h-8zM142 641h16v1h-16zM88 635h4v1h-4zM439 708h3v1h-3zM1120 708h2v1h-2zM1294 708h16v1h-16zM305 688h3v1h-3zM329 688h2v1h-2zM394 688h4v1h-4zM986 688h2v1h-2zM1196 688h3v1h-3zM455 714h2v1h-2zM516 743h3v1h-3zM601 743h2v1h-2zM267 676h3v1h-3zM1006 676h2v1h-2zM1030 676h2v1h-2zM830 565h3v1h-3zM196 652h3v1h-3zM417 697h2v1h-2zM1150 697h5v1h-5zM1260 697h4v1h-4zM251 669h3v1h-3zM435 706h2v1h-2zM1068 706h2v1h-2zM1124 706h3v1h-3zM1283 706h2v1h-2zM1319 706h2v1h-2zM254 670h2v1h-2zM244 666h3v1h-3zM501 739h3v1h-3zM609 739h2v1h-2zM933 739h5v1h-5zM4 619h10v1h-10zM24 619h6v1h-6zM46 619h5v1h-5zM475 725h2v1h-2zM167 643h3v1h-3zM302 687h3v1h-3zM331 687h3v1h-3zM391 687h3v1h-3zM1171 687h2v1h-2zM1194 687h2v1h-2zM493 735h2v1h-2zM617 735h2v1h-2zM463 718h2v1h-2zM421 699h2v1h-2zM1140 699h4v1h-4zM1268 699h3v1h-3zM263 674h2v1h-2zM1010 674h2v1h-2zM1018 674h8v1h-8zM188 650h4v1h-4zM69 628h2v1h-2zM821 562h2v1h-2zM199 653h3v1h-3zM495 736h2v1h-2zM615 736h2v1h-2zM447 711h3v1h-3zM1074 711h2v1h-2zM1090 711h8v1h-8zM1113 711h2v1h-2zM82 633h2v1h-2zM459 716h2v1h-2zM318 690h9v1h-9zM401 690h3v1h-3zM1166 690h2v1h-2zM1202 690h2v1h-2zM170 644h2v1h-2zM519 744h2v1h-2zM599 744h2v1h-2zM472 723h2v1h-2zM74 630h2v1h-2zM14 620h10v1h-10zM51 620h4v1h-4zM433 705h2v1h-2zM1127 705h2v1h-2zM1281 705h2v1h-2zM1321 705h2v1h-2zM61 624h2v1h-2zM224 660h4v1h-4zM556 755h4v1h-4zM570 755h4v1h-4zM491 734h2v1h-2zM619 734h3v1h-3zM926 734h2v1h-2zM542 752h5v1h-5zM580 752h3v1h-3zM413 695h2v1h-2zM1158 695h2v1h-2zM1250 695h6v1h-6zM427 702h2v1h-2zM1063 702h2v1h-2zM1134 702h2v1h-2zM1275 702h2v1h-2zM1328 702h2v1h-2zM84 634h4v1h-4zM700 634h2v1h-2zM512 742h4v1h-4zM603 742h2v1h-2zM419 698h2v1h-2zM1144 698h6v1h-6zM1264 698h4v1h-4zM786 537h4v1h-4zM480 728h2v1h-2zM918 728h2v1h-2zM530 749h2v1h-2zM587 749h3v1h-3zM216 658h4v1h-4zM274 679h2v1h-2zM999 679h2v1h-2zM1035 679h2v1h-2zM100 638h6v1h-6zM192 651h4v1h-4zM258 672h2v1h-2zM409 693h2v1h-2zM1230 693h12v1h-12zM172 645h3v1h-3zM759 546h2v1h-2zM803 546h2v1h-2zM485 731h2v1h-2zM626 731h2v1h-2zM922 731h2v1h-2zM437 707h2v1h-2zM1122 707h2v1h-2zM1285 707h9v1h-9zM1310 707h9v1h-9zM423 700h2v1h-2zM1138 700h2v1h-2zM1271 700h2v1h-2zM1332 700h2v1h-2zM536 751h6v1h-6zM583 751h2v1h-2zM411 694h2v1h-2zM1160 694h2v1h-2zM1242 694h8v1h-8zM499 738h2v1h-2zM611 738h2v1h-2zM938 738h8v1h-8zM483 730h2v1h-2zM628 730h2v1h-2zM79 632h3v1h-3zM298 686h4v1h-4zM334 686h2v1h-2zM388 686h3v1h-3zM1173 686h9v1h-9zM1191 686h3v1h-3zM71 629h3v1h-3zM178 647h2v1h-2zM431 704h2v1h-2zM1129 704h2v1h-2zM1279 704h2v1h-2zM1323 704h3v1h-3zM231 662h3v1h-3zM461 717h2v1h-2zM106 639h8v1h-8zM202 654h4v1h-4zM771 540h2v1h-2zM508 741h4v1h-4zM605 741h2v1h-2zM521 745h2v1h-2zM596 745h3v1h-3zM276 680h4v1h-4zM997 680h2v1h-2zM564 757h3v1h-3zM425 701h2v1h-2zM1136 701h2v1h-2zM1273 701h2v1h-2zM1330 701h2v1h-2zM59 623h2v1h-2zM444 710h3v1h-3zM1115 710h3v1h-3zM497 737h2v1h-2zM613 737h2v1h-2zM930 737h2v1h-2zM946 737h4v1h-4zM256 671h2v1h-2zM247 667h2v1h-2zM249 668h2v1h-2zM228 661h3v1h-3zM272 678h2v1h-2zM1001 678h2v1h-2zM761 545h2v1h-2zM63 625h2v1h-2zM30 618h5v1h-5zM40 618h6v1h-6zM209 656h3v1h-3zM552 754h4v1h-4zM574 754h3v1h-3zM487 732h2v1h-2zM624 732h2v1h-2zM180 648h4v1h-4zM234 663h4v1h-4zM823 563h3v1h-3zM478 727h2v1h-2zM769 541h2v1h-2zM795 541h2v1h-2zM35 617h5v1h-5zM523 746h3v1h-3zM594 746h2v1h-2zM76 631h3v1h-3zM67 627h2v1h-2zM532 750h4v1h-4zM585 750h2v1h-2zM757 547h2v1h-2zM812 554h2v1h-2zM270 677h2v1h-2zM1003 677h3v1h-3zM1032 677h2v1h-2zM489 733h2v1h-2zM622 733h2v1h-2zM96 637h4v1h-4zM114 640h8v1h-8zM206 655h3v1h-3zM280 681h4v1h-4zM1038 681h2v1h-2zM92 636h4v1h-4zM528 748h2v1h-2zM590 748h2v1h-2zM833 566h3v1h-3zM773 539h5v1h-5zM792 539h2v1h-2zM65 626h2v1h-2zM467 720h2v1h-2zM767 542h2v1h-2zM765 543h2v1h-2zM798 543h2v1h-2zM238 664h3v1h-3zM55 621h2v1h-2zM57 622h2v1h-2zM763 544h2v1h-2zM800 544h2v1h-2zM826 564h4v1h-4zM526 747h2v1h-2zM592 747h2v1h-2zM836 567h2v1h-2zM967 714h1v2h-1zM756 549h1v2h-1zM878 645h1v3h-1zM871 624h1v3h-1zM703 632h1v1h-1zM820 561h1v1h-1zM469 721h1v1h-1zM892 683h1v2h-1zM684 655h1v2h-1zM731 596h1v1h-1zM696 638h1v1h-1zM716 616h1v2h-1zM719 612h1v1h-1zM743 578h1v2h-1zM874 633h1v3h-1zM882 657h1v3h-1zM838 568h1v2h-1zM1073 710h1v1h-1zM903 707h1v1h-1zM875 636h1v3h-1zM852 589h1v2h-1zM888 673h1v3h-1zM644 712h1v1h-1zM691 644h1v2h-1zM917 727h1v1h-1zM680 662h1v1h-1zM660 693h1v1h-1zM899 699h1v2h-1zM739 585h1v2h-1zM751 560h1v2h-1zM636 722h1v1h-1zM794 540h1v1h-1zM652 703h1v1h-1zM819 560h1v1h-1zM687 650h1v2h-1zM667 682h1v2h-1zM895 689h1v3h-1zM932 738h1v1h-1zM734 592h1v1h-1zM676 668h1v2h-1zM808 550h1v1h-1zM647 709h1v1h-1zM881 654h1v3h-1zM750 562h1v2h-1zM1058 697h1v1h-1zM902 705h1v2h-1zM842 574h1v2h-1zM683 657h1v2h-1zM974 703h1v2h-1zM663 689h1v1h-1zM966 716h1v2h-1zM916 725h1v2h-1zM655 699h1v1h-1zM928 735h1v1h-1zM639 718h1v1h-1zM870 621h1v3h-1zM970 710h1v1h-1zM891 680h1v3h-1zM710 624h1v2h-1zM631 728h1v1h-1zM722 608h1v1h-1zM707 628h1v1h-1zM679 663h1v2h-1zM1046 686h1v1h-1zM887 671h1v2h-1zM841 573h1v1h-1zM950 736h1v1h-1zM1047 687h1v1h-1zM686 652h1v2h-1zM730 597h1v2h-1zM894 687h1v2h-1zM884 663h1v3h-1zM815 556h1v1h-1zM742 580h1v2h-1zM877 642h1v3h-1zM981 692h1v1h-1zM961 723h1v1h-1zM725 604h1v1h-1zM690 646h1v1h-1zM958 726h1v1h-1zM1057 696h1v1h-1zM985 689h1v1h-1zM901 703h1v2h-1zM989 686h1v1h-1zM904 708h1v2h-1zM953 732h1v1h-1zM977 698h1v2h-1zM840 571h1v2h-1zM905 710h1v1h-1zM666 684h1v1h-1zM733 593h1v2h-1zM898 696h1v3h-1zM705 630h1v1h-1zM873 630h1v3h-1zM814 555h1v1h-1zM749 564h1v3h-1zM698 636h1v1h-1zM718 613h1v2h-1zM662 690h1v2h-1zM1042 683h1v1h-1zM754 553h1v2h-1zM646 710h1v1h-1zM713 620h1v2h-1zM973 705h1v1h-1zM993 683h1v1h-1zM900 701h1v2h-1zM880 651h1v3h-1zM682 659h1v1h-1zM844 577h1v2h-1zM641 716h1v1h-1zM741 582h1v2h-1zM753 555h1v3h-1zM474 724h1v1h-1zM980 693h1v2h-1zM654 700h1v1h-1zM969 711h1v2h-1zM721 609h1v2h-1zM724 605h1v2h-1zM957 727h1v2h-1zM736 589h1v2h-1zM678 665h1v2h-1zM702 633h1v1h-1zM649 706h1v1h-1zM893 685h1v2h-1zM630 729h1v1h-1zM876 639h1v3h-1zM809 551h1v1h-1zM665 685h1v2h-1zM839 570h1v1h-1zM869 619h1v2h-1zM1034 678h1v1h-1zM810 552h1v1h-1zM748 567h1v2h-1zM693 641h1v1h-1zM907 712h1v2h-1zM890 678h1v2h-1zM843 576h1v1h-1zM908 714h1v1h-1zM669 679h1v2h-1zM885 666h1v3h-1zM638 719h1v1h-1zM1049 689h1v1h-1zM689 647h1v2h-1zM709 626h1v1h-1zM712 622h1v1h-1zM633 725h1v1h-1zM952 733h1v2h-1zM1059 698h1v1h-1zM1070 707h1v1h-1zM976 700h1v1h-1zM755 551h1v2h-1zM846 580h1v2h-1zM653 701h1v2h-1zM1060 699h1v1h-1zM1071 708h1v1h-1zM732 595h1v1h-1zM850 586h1v2h-1zM727 601h1v2h-1zM960 724h1v1h-1zM648 707h1v2h-1zM672 675h1v1h-1zM963 720h1v1h-1zM715 618h1v1h-1zM972 706h1v2h-1zM929 736h1v1h-1zM872 627h1v3h-1zM984 690h1v1h-1zM955 730h1v1h-1zM979 695h1v2h-1zM868 617h1v2h-1zM889 676h1v2h-1zM637 720h1v2h-1zM864 610h1v2h-1zM704 631h1v1h-1zM845 579h1v1h-1zM1048 688h1v1h-1zM861 605h1v1h-1zM632 726h1v2h-1zM816 557h1v1h-1zM896 692h1v2h-1zM747 569h1v2h-1zM692 642h1v2h-1zM1066 704h1v1h-1zM975 701h1v2h-1zM805 547h1v1h-1zM752 558h1v2h-1zM640 717h1v1h-1zM867 615h1v2h-1zM924 732h1v1h-1zM656 698h1v1h-1zM906 711h1v1h-1zM860 603h1v2h-1zM668 681h1v1h-1zM735 591h1v1h-1zM925 733h1v1h-1zM909 715h1v2h-1zM738 587h1v1h-1zM849 585h1v1h-1zM971 708h1v2h-1zM910 717h1v1h-1zM651 704h1v1h-1zM853 591h1v1h-1zM695 639h1v1h-1zM675 670h1v1h-1zM664 687h1v2h-1zM1065 703h1v1h-1zM1054 693h1v1h-1zM1055 694h1v1h-1zM659 694h1v1h-1zM811 553h1v1h-1zM671 676h1v2h-1zM962 721h1v2h-1zM1165 691h1v1h-1zM863 608h1v2h-1zM866 613h1v2h-1zM848 583h1v2h-1zM856 596h1v2h-1zM859 601h1v2h-1zM723 607h1v1h-1zM635 723h1v1h-1zM746 571h1v2h-1zM1062 701h1v1h-1zM711 623h1v1h-1zM1076 712h1v1h-1zM883 660h1v3h-1zM951 735h1v1h-1zM954 731h1v1h-1zM920 729h1v1h-1zM978 697h1v1h-1zM643 713h1v1h-1zM797 542h1v1h-1zM699 635h1v1h-1zM862 606h1v2h-1zM726 603h1v1h-1zM729 599h1v1h-1zM847 582h1v1h-1zM674 671h1v2h-1zM855 594h1v2h-1zM1061 700h1v1h-1zM1072 709h1v1h-1zM912 720h1v1h-1zM1050 690h1v1h-1zM897 694h1v2h-1zM913 721h1v1h-1zM658 695h1v2h-1zM745 573h1v3h-1zM706 629h1v1h-1zM965 718h1v1h-1zM807 549h1v1h-1zM757 548h1v1h-1zM858 599h1v2h-1zM879 648h1v3h-1zM911 718h1v2h-1zM851 588h1v1h-1zM854 592h1v2h-1zM714 619h1v1h-1zM717 615h1v1h-1zM661 692h1v1h-1zM694 640h1v1h-1zM988 687h1v1h-1zM817 558h1v1h-1zM642 714h1v2h-1zM818 559h1v1h-1zM992 684h1v1h-1zM670 678h1v1h-1zM737 588h1v1h-1zM865 612h1v1h-1zM685 654h1v1h-1zM650 705h1v1h-1zM697 637h1v1h-1zM968 713h1v1h-1zM720 611h1v1h-1zM857 598h1v1h-1zM634 724h1v1h-1zM886 669h1v2h-1zM744 576h1v2h-1zM645 711h1v1h-1zM681 660h1v2h-1zM1067 705h1v1h-1zM996 681h1v1h-1zM806 548h1v1h-1zM673 673h1v2h-1zM740 584h1v1h-1zM1056 695h1v1h-1zM1045 685h1v1h-1zM956 729h1v1h-1zM914 722h1v2h-1zM708 627h1v1h-1zM677 667h1v1h-1zM482 729h1v1h-1zM915 724h1v1h-1zM802 545h1v1h-1zM477 726h1v1h-1zM921 730h1v1h-1zM964 719h1v1h-1zM728 600h1v1h-1zM688 649h1v1h-1zM959 725h1v1h-1zM1170 688h1v1h-1zM1162 693h1v1h-1zM657 697h1v1h-1zM1037 680h1v1h-1zM1051 691h1v1h-1z" fill="#ffffff"/>
<rect x="4" y="643" width="3" height="14" fill="#ff0000"/>
<rect x="20" y="645" width="3" height="12" fill="#ff0000"/>
<rect x="36" y="644" width="3" height="13" fill="#ff0000"/>
<rect x="52" y="649" width="3" height="8" fill="#ff0000"/>
<rect x="68" y="656" width="3" height="3" fill="#00ff00"/>
<rect x="84" y="656" width="3" height="10" fill="#00ff00"/>
<rect x="100" y="656" width="3" height="14" fill="#00ff00"/>
<rect x="116" y="656" width="3" height="14" fill="#00ff00"/>
<rect x="132" y="656" width="3" height="14" fill="#00ff00"/>
<rect x="148" y="656" width="3" height="11" fill="#00ff00"/>
<rect x="164" y="656" width="3" height="10" fill="#00ff00"/>
<rect x="180" y="656" width="3" height="12" fill="#00ff00"/>
<rect x="196" y="656" width="3" height="13" fill="#00ff00"/>
<rect x="212" y="656" width="3" height="14" fill="#00ff00"/>
<rect x="228" y="656" width="3" height="14" fill="#00ff00"/>
<rect x="244" y="656" width="3" height="17" fill="#00ff00"/>
<rect x="260" y="656" width="3" height="21" fill="#00ff00"/>
<rect x="276" y="656" width="3" height="23" fill="#00ff00"/>
<rect x="292" y="656" width="3" height="23" fill="#00ff00"/>
<rect x="308" y="656" width="3" height="22" fill="#00ff00"/>
<rect x="324" y="656" width="3" height="18" fill="#00ff00"/>
<rect x="340" y="656" width="3" height="8" fill="#00ff00"/>
<rect x="356" y="656" width="3" height="4" fill="#00ff00"/>
<rect x="372" y="656" width="3" height="2" fill="#00ff00"/>
<rect x="388" y="656" width="3" height="4" fill="#00ff00"/>
<rect x="404" y="656" width="3" height="7" fill="#00ff00"/>
<rect x="420" y="656" width="3" height="12" fill="#00ff00"/>
<rect x="436" y="656" width="3" height="18" fill="#00ff00"/>
<rect x="452" y="656" width="3" height="22" fill="#00ff00"/>
<rect x="468" y="656" width="3" height="27" fill="#00ff00"/>
<rect x="484" y="656" width="3" height="31" fill="#00ff00"/>
<rect x="500" y="656" width="3" height="32" fill="#00ff00"/>
<rect x="516" y="656" width="3" height="29" fill="#00ff00"/>
<rect x="532" y="656" width="3" height="29" fill="#00ff00"/>
<rect x="548" y="656" width="3" height="26" fill="#00ff00"/>
<rect x="564" y="656" width="3" height="22" fill="#00ff00"/>
<rect x="580" y="656" width="3" height="12" fill="#00ff00"/>
<rect x="596" y="656" width="3" height="3" fill="#00ff00"/>
<rect x="612" y="648" width="3" height="9" fill="#ff0000"/>
<rect x="628" y="641" width="3" height="16" fill="#ff0000"/>
<rect x="644" y="624" width="3" height="33" fill="#ff0000"/>
<rect x="660" y="611" width="3" height="46" fill="#ff0000"/>
<rect x="676" y="595" width="3" height="62" fill="#ff0000"/>
<rect x="692" y="582" width="3" height="75" fill="#ff0000"/>
<rect x="708" y="582" width="3" height="75" fill="#ff0000"/>
<rect x="724" y="576" width="3" height="81" fill="#ff0000"/>
<rect x="740" y="572" width="3" height="85" fill="#ff0000"/>
<rect x="756" y="560" width="3" height="97" fill="#ff0000"/>
<rect x="772" y="572" width="3" height="85" fill="#ff0000"/>
<rect x="788" y="589" width="3" height="68" fill="#ff0000"/>
<rect x="804" y="615" width="3" height="42" fill="#ff0000"/>
<rect x="820" y="642" width="3" height="15" fill="#ff0000"/>
<rect x="836" y="655" width="3" height="2" fill="#ff0000"/>
<rect x="852" y="656" width="3" height="27" fill="#00ff00"/>
<rect x="868" y="656" width="3" height="55" fill="#00ff00"/>
<rect x="884" y="656" width="3" height="94" fill="#00ff00"/>
<rect x="900" y="656" width="3" height="112" fill="#00ff00"/>
<rect x="916" y="656" width="3" height="115" fill="#00ff00"/>
<rect x="932" y="656" width="3" height="104" fill="#00ff00"/>
<rect x="948" y="656" width="3" height="81" fill="#00ff00"/>
<rect x="964" y="656" width="3" height="45" fill="#00ff00"/>
<rect x="980" y="656" width="3" height="4" fill="#00ff00"/>
<rect x="996" y="638" width="3" height="19" fill="#ff0000"/>
<rect x="1012" y="624" width="3" height="33" fill="#ff0000"/>
<rect x="1028" y="625" width="3" height="32" fill="#ff0000"/>
<rect x="1044" y="639" width="3" height="18" fill="#ff0000"/>
<rect x="1060" y="656" width="3" height="1" fill="#00ff00"/>
<rect x="1076" y="656" width="3" height="16" fill="#00ff00"/>
<rect x="1092" y="656" width="3" height="17" fill="#00ff00"/>
<rect x="1108" y="656" width="3" height="20" fill="#00ff00"/>
<rect x="1124" y="656" width="3" height="11" fill="#00ff00"/>
<rect x="1140" y="656" width="3" height="3" fill="#00ff00"/>
<rect x="1156" y="652" width="3" height="5" fill="#ff0000"/>
<rect x="1172" y="640" width="3" height="17" fill="#ff0000"/>
<rect x="1188" y="640" width="3" height="17" fill="#ff0000"/>
<rect x="1204" y="647" width="3" height="10" fill="#ff0000"/>
<rect x="1220" y="650" width="3" height="7" fill="#ff0000"/>
<rect x="1236" y="654" width="3" height="3" fill="#ff0000"/>
<rect x="1252" y="656" width="3" height="2" fill="#00ff00"/>
<rect x="1268" y="656" width="3" height="7" fill="#00ff00"/>
<rect x="1284" y="656" width="3" height="14" fill="#00ff00"/>
<rect x="1300" y="656" width="3" height="13" fill="#00ff00"/>
<rect x="1316" y="656" width="3" height="10" fill="#00ff00"/>
<rect x="1332" y="656" width="3" height="1" fill="#00ff00"/>
<path d="M67.0 619 h3 v5 l2 -2 l1 1 v1.5 l-4.5 4.5 l-4.5 -4.5 v-1.5 l1 -1 l2 2 z" fill="#0000ff" shape-rendering="geometricPrecision"/>
<path d="M613 740.8 l4.2 4.2 v3 l-0.8 0.2 l-2.3 -2.6 v5.4 h-2.2 v-5.4 l-2.3 2.6 l-0.8 -0.2 v-3 z" fill="#ffff00" shape-rendering="geometricPrecision"/>
<path d="M851.0 558 h3 v5 l2 -2 l1 1 v1.5 l-4.5 4.5 l-4.5 -4.5 v-1.5 l1 -1 l2 2 z" fill="#0000ff" shape-rendering="geometricPrecision"/>
<path d="M997 694.8 l4.2 4.2 v3 l-0.8 0.2 l-2.3 -2.6 v5.4 h-2.2 v-5.4 l-2.3 2.6 l-0.8 -0.2 v-3 z" fill="#ffff00" shape-rendering="geometricPrecision"/>
<path d="M1059.0 694 h3 v5 l2 -2 l1 1 v1.5 l-4.5 4.5 l-4.5 -4.5 v-1.5 l1 -1 l2 2 z" fill="#0000ff" shape-rendering="geometricPrecision"/>
<path d="M1157 695.8 l4.2 4.2 v3 l-0.8 0.2 l-2.3 -2.6 v5.4 h-2.2 v-5.4 l-2.3 2.6 l-0.8 -0.2 v-3 z" fill="#ffff00" shape-rendering="geometricPrecision"/>
<path d="M1251.0 688 h3 v5 l2 -2 l1 1 v1.5 l-4.5 4.5 l-4.5 -4.5 v-1.5 l1 -1 l2 2 z" fill="#0000ff" shape-rendering="geometricPrecision"/>
</g>
<rect x="4" y="4" width="1364" height="1" fill="#ffffff"/>
<rect x="4" y="522" width="1364" height="1" fill="#ffffff"/>
<rect x="4" y="4" width="1" height="519" fill="#ffffff"/>
<rect x="1367" y="4" width="1" height="519" fill="#ffffff"/>
<rect x="4" y="524" width="1364" height="1" fill="#ffffff"/>
<rect x="4" y="782" width="1364" height="1" fill="#ffffff"/>
<rect x="4" y="524" width="1" height="259" fill="#ffffff"/>
<rect x="1367" y="524" width="1" height="259" fill="#ffffff"/>
<rect x="1368" y="32" width="2" height="1" fill="#ffffff"/>
<rect x="1368" y="97" width="2" height="1" fill="#ffffff"/>
<rect x="1368" y="162" width="2" height="1" fill="#ffffff"/>
<rect x="1368" y="227" width="2" height="1" fill="#ffffff"/>
<rect x="1368" y="292" width="2" height="1" fill="#ffffff"/>
<rect x="1368" y="357" width="2" height="1" fill="#ffffff"/>
<rect x="1368" y="422" width="2" height="1" fill="#ffffff"/>
<rect x="1368" y="487" width="2" height="1" fill="#ffffff"/>
<rect x="1368" y="656" width="2" height="1" fill="#ffffff"/>
<rect x="1368" y="526" width="1" height="1" fill="#ffffff"/>
<rect x="1368" y="781" width="1" height="1" fill="#ffffff"/>
<rect x="5" y="783" width="1" height="3" fill="#ffffff"/>
<rect x="133" y="783" width="1" height="3" fill="#ffffff"/>
<rect x="261" y="783" width="1" height="3" fill="#ffffff"/>
<rect x="389" y="783" width="1" height="3" fill="#ffffff"/>
<rect x="517" y="783" width="1" height="3" fill="#ffffff"/>
<rect x="645" y="783" width="1" height="3" fill="#ffffff"/>
<rect x="773" y="783" width="1" height="3" fill="#ffffff"/>
<rect x="901" y="783" width="1" height="3" fill="#ffffff"/>
<rect x="1029" y="783" width="1" height="3" fill="#ffffff"/>
<rect x="1157" y="783" width="1" height="3" fill="#ffffff"/>
<rect x="1285" y="783" width="1" height="3" fill="#ffffff"/>
<rect x="1369" y="364" width="61" height="17" fill="#ffffff"/>
<path d="M8 12 h11 l-5.5 6.2 z" fill="#fff" shape-rendering="geometricPrecision"/></svg>
<div class="t" style="left:26.0px;top:8.01px;color:#fff;transform:scaleX(0.875);">EURUSD</div>
<div class="t" style="left:79.9px;top:8.01px;color:#fff;transform:scaleX(0.9556);">.raw,</div>
<div class="t" style="left:108.3px;top:8.01px;color:#fff;transform:scaleX(0.91);">Daily</div>
<div class="t" style="left:146.0px;top:8.01px;color:#fff;">1.08280 1.08854 1.08097 1.08825</div>
<div class="t" style="left:9.0px;top:529.01px;color:#fff;transform:scaleX(0.905);">MACD</div>
<div class="t" style="left:46.2px;top:529.01px;color:#fff;transform:scaleX(1.01);">(12,26,9)</div>
<div class="t" style="left:108.5px;top:529.01px;color:#fff;">-0.0033360 -0.0032851 -0.0000509</div>
<div class="t" style="left:1374px;top:25.01px;color:#fff;">1.14915</div>
<div class="t" style="left:1374px;top:90.01px;color:#fff;">1.13745</div>
<div class="t" style="left:1374px;top:155.01px;color:#fff;">1.12590</div>
<div class="t" style="left:1374px;top:220.01px;color:#fff;">1.11420</div>
<div class="t" style="left:1374px;top:285.01px;color:#fff;">1.10250</div>
<div class="t" style="left:1374px;top:350.01px;color:#fff;">1.09080</div>
<div class="t" style="left:1374px;top:415.01px;color:#fff;">1.07925</div>
<div class="t" style="left:1374px;top:480.01px;color:#fff;">1.06755</div>
<div class="t" style="left:1374px;top:365.01px;color:#000;">1.08825</div>
<div class="t" style="left:1370.5px;top:527.01px;color:#fff;">0.009849</div>
<div class="t" style="left:1370.5px;top:649.01px;color:#fff;">0.00</div>
<div class="t" style="left:1370.5px;top:765.01px;color:#fff;">-0.009499</div>
<div class="t" style="left:3.5px;top:787.01px;color:#fff;transform:scaleX(0.973);">2 Jan 2020</div>
<div class="t" style="left:131.5px;top:787.01px;color:#fff;transform:scaleX(0.973);">14 Jan 2020</div>
<div class="t" style="left:259.5px;top:787.01px;color:#fff;transform:scaleX(0.973);">24 Jan 2020</div>
<div class="t" style="left:387.5px;top:787.01px;color:#fff;transform:scaleX(0.973);">5 Feb 2020</div>
<div class="t" style="left:515.5px;top:787.01px;color:#fff;transform:scaleX(0.973);">17 Feb 2020</div>
<div class="t" style="left:643.5px;top:787.01px;color:#fff;transform:scaleX(0.973);">27 Feb 2020</div>
<div class="t" style="left:771.5px;top:787.01px;color:#fff;transform:scaleX(0.973);">10 Mar 2020</div>
<div class="t" style="left:899.5px;top:787.01px;color:#fff;transform:scaleX(0.973);">20 Mar 2020</div>
<div class="t" style="left:1027.5px;top:787.01px;color:#fff;transform:scaleX(0.998);">1 Apr 2020</div>
<div class="t" style="left:1155.5px;top:787.01px;color:#fff;transform:scaleX(0.998);">13 Apr 2020</div>
<div class="t" style="left:1283.5px;top:787.01px;color:#fff;transform:scaleX(0.998);">23 Apr 2020</div>
<svg width="1430" height="811" viewBox="0 0 1430 811" style="position:absolute;left:0;top:0"><path d="M1416 811 V780 Q1416 775.5 1420.5 775.5 H1430 V811 Z" fill="#2b2b2b"/><path d="M1419 811 V780.5 Q1419 776.5 1423 776.5 Q1427 776.5 1427 780.5 V811 Z" fill="#474747"/><path d="M1421 811 V789 Q1421 786.8 1423.2 786.8 Q1425.4 786.8 1425.4 789 V811 Z" fill="#f05a1e"/></svg>
</body></html>
